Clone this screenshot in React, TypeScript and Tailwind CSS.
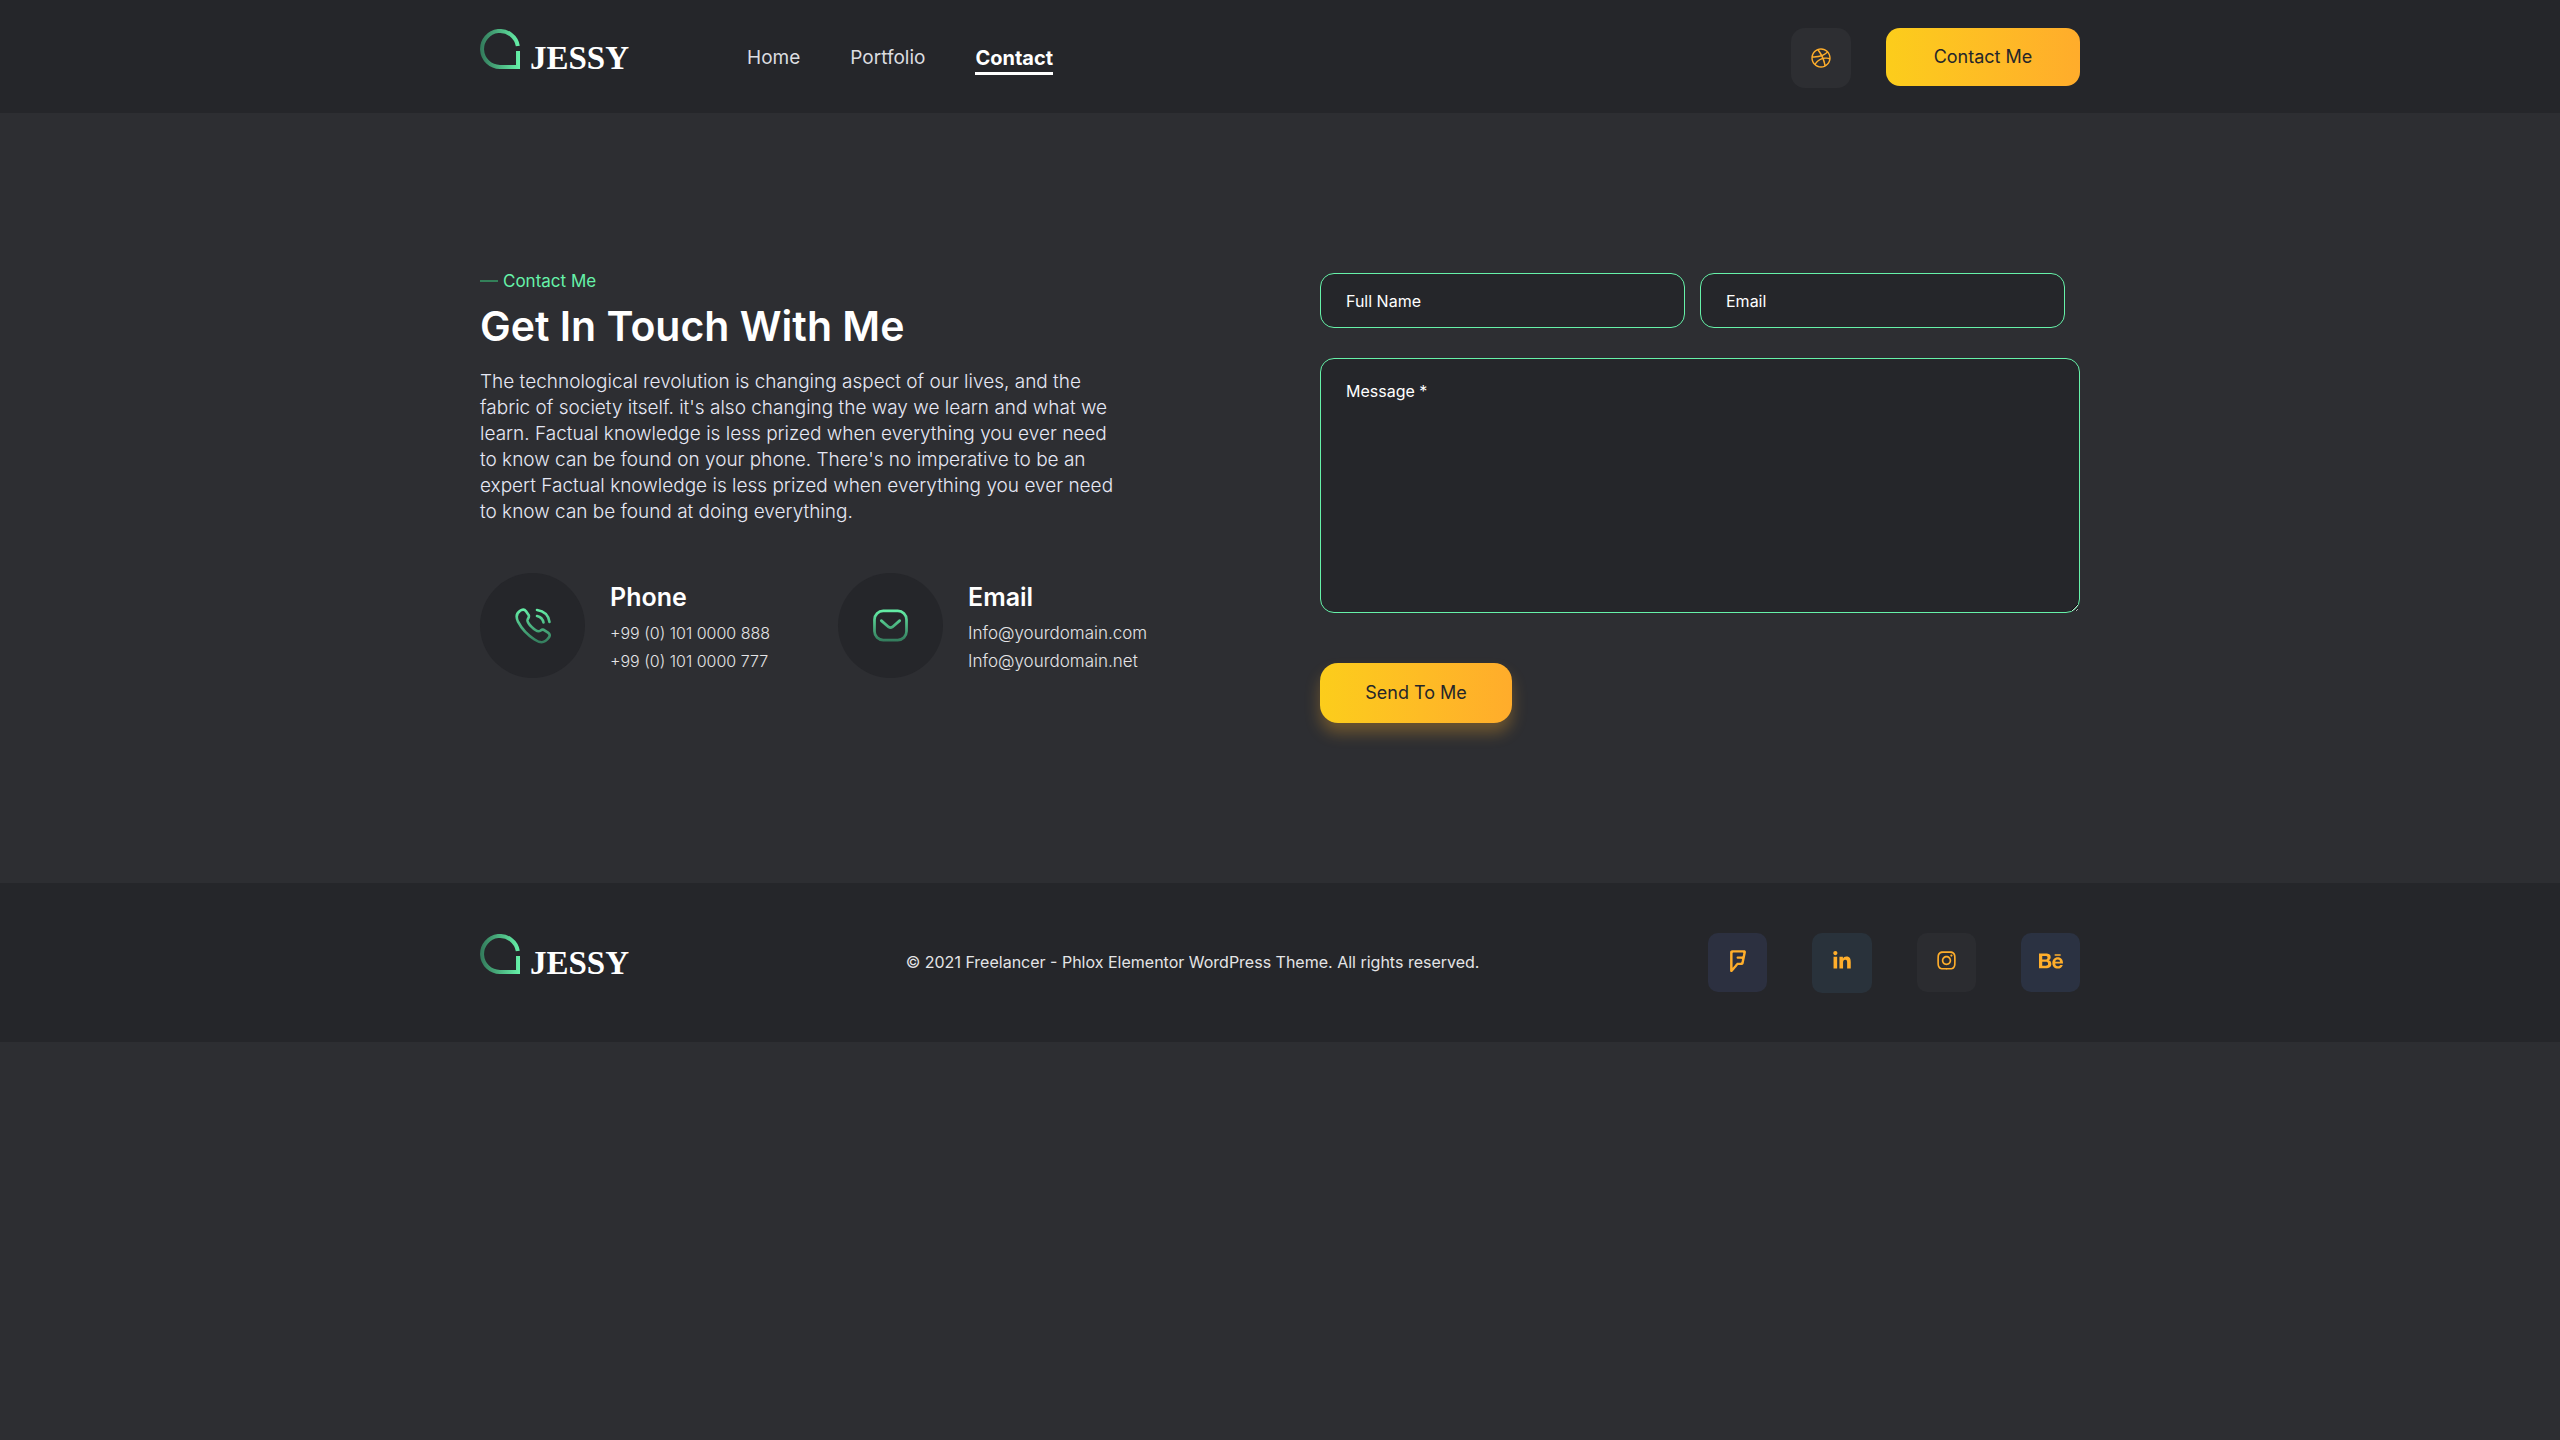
import { FaBehance, FaDribbble, FaFoursquare, FaInstagram, FaLinkedinIn } from "react-icons/fa";

type LogoProps = {
  id: string;
};

function Logo({ id }: LogoProps) {
  return (
    <a href="#" className="flex items-start gap-2.5">
      <svg width="40" height="40" viewBox="0 0 40 40" fill="none" className="mt-px block">
        <defs>
          <linearGradient id={id} x1="0" y1="20" x2="40" y2="20" gradientUnits="userSpaceOnUse">
            <stop stopColor="#32785a" />
            <stop offset="1" stopColor="#66f2a9" />
          </linearGradient>
        </defs>
        <path
          d="M37.8 17A18 18 0 1 0 20 38H38V22"
          stroke={`url(#${id})`}
          strokeWidth="4"
        />
      </svg>
      <span className="mt-3 font-['Liberation_Serif',serif] text-[33px] leading-9 font-bold text-white">
        JESSY
      </span>
    </a>
  );
}

function PhoneIcon() {
  return (
    <svg width="36" height="36" viewBox="0 0 36 36" fill="none" strokeLinecap="round" strokeLinejoin="round">
      <defs>
        <linearGradient id="phone" x1="0" y1="0" x2="0" y2="36" gradientUnits="userSpaceOnUse">
          <stop stopColor="#66f2a9" />
          <stop offset="1" stopColor="#32785a" />
        </linearGradient>
      </defs>
      <g stroke="url(#phone)" strokeWidth="2.6">
        <path d="M5 2.800C7.500 1 9.500 1.200 11 3.200L13.600 7C15 9.500 12.300 10.300 12.500 12.700C13 16 20 23 23.500 23.300C25.700 23.500 26 20.800 28.700 21.800L33 24.600C35 26 35.200 27.800 33.800 29.600C29.500 35.800 25 35.200 19.500 31.500C12.500 27 6.500 20.500 3 13.700C0.800 9 1 5.500 5 2.800Z" />
        <path d="M22 2C29 3 33.500 7.500 34.500 14" />
        <path d="M22 8C25.500 8.800 27.800 11 28.500 14.500" />
      </g>
    </svg>
  );
}

function MailIcon() {
  return (
    <svg width="35" height="33" viewBox="0 0 36 34" fill="none" strokeLinecap="round" strokeLinejoin="round">
      <defs>
        <linearGradient id="mail" x1="0" y1="0" x2="0" y2="34" gradientUnits="userSpaceOnUse">
          <stop stopColor="#66f2a9" />
          <stop offset="1" stopColor="#32785a" />
        </linearGradient>
      </defs>
      <g stroke="url(#mail)" strokeWidth="2.8">
        <rect x="1.500" y="2" width="33" height="30" rx="9" />
        <path d="M8.500 12L16 18.500Q18 20 20 18.500L27.500 12" />
      </g>
    </svg>
  );
}

export default function App() {
  return (
    <div className="min-h-screen bg-[#2d2e32] font-[Inter,sans-serif] text-white">
      <header className="bg-[#25262a]">
        <div className="mx-auto flex h-[113px] max-w-[1600px] items-start pt-7">
          <Logo id="logo-header" />
          <nav className="mt-4 ml-[118px] flex gap-[50px] text-[19px] leading-7 text-[#dcdde0]">
            <a href="#">Home</a>
            <a href="#">Portfolio</a>
            <a href="#" className="border-b-3 border-white text-xl leading-7 font-bold text-white">
              Contact
            </a>
          </nav>
          <div className="ml-auto flex items-start gap-[35px]">
            <a
              href="#"
              aria-label="Dribbble"
              className="flex size-[60px] items-center justify-center rounded-[14px] bg-[#2d2e32] text-[#ffae2b]"
            >
              <FaDribbble size={20} />
            </a>
            <button className="h-[58px] w-[194px] rounded-[14px] bg-linear-to-r from-[#fccd1b] to-[#ffac2b] text-lg text-[#25262a]">
              Contact Me
            </button>
          </div>
        </div>
      </header>

      <main className="mx-auto flex max-w-[1600px] justify-between pt-40 pb-40">
        <section className="w-[700px]">
          <p className="mt-[-4px] flex items-center gap-[5px] text-[17px] leading-6 text-[#66f2a9]">
            <span className="h-0.5 w-[18px] bg-[#338059]" />
            Contact Me
          </p>
          <h1 className="mt-2 text-[41px] leading-[50px] font-semibold">Get In Touch With Me</h1>
          <p className="mt-[18px] text-[19px] leading-[26px] font-light text-[#e6e8f5]">
            The technological revolution is changing aspect of our lives, and the
            <br />
            fabric of society itself. it's also changing the way we learn and what we
            <br />
            learn. Factual knowledge is less prized when everything you ever need
            <br />
            to know can be found on your phone. There's no imperative to be an
            <br />
            expert Factual knowledge is less prized when everything you ever need
            <br />
            to know can be found at doing everything.
          </p>
          <div className="mt-12 flex">
            <div className="flex w-[358px] gap-[25px]">
              <div className="flex size-[105px] items-center justify-center rounded-full bg-[#25262a]">
                <PhoneIcon />
              </div>
              <div className="pt-2">
                <h2 className="text-[25px] leading-8 font-semibold">Phone</h2>
                <p className="mt-1.5 text-base leading-7 font-light text-[#e4e4e6]">
                  +99 (0) 101 0000 888
                  <br />
                  +99 (0) 101 0000 777
                </p>
              </div>
            </div>
            <div className="flex gap-[25px]">
              <div className="flex size-[105px] items-center justify-center rounded-full bg-[#25262a]">
                <MailIcon />
              </div>
              <div className="pt-2">
                <h2 className="text-[25px] leading-8 font-semibold">Email</h2>
                <p className="mt-1.5 text-[17px] leading-7 font-light text-[#e4e4e6]">
                  Info@yourdomain.com
                  <br />
                  Info@yourdomain.net
                </p>
              </div>
            </div>
          </div>
        </section>

        <form className="w-[760px]">
          <div className="mr-[15px] flex gap-[15px]">
            <input
              type="text"
              aria-label="Full Name"
              placeholder="Full Name"
              className="h-[55px] min-w-0 flex-1 rounded-[14px] border border-[#66f2a9] bg-[#25262a] px-[25px] text-base placeholder:text-white"
            />
            <input
              type="email"
              aria-label="Email"
              placeholder="Email"
              className="h-[55px] min-w-0 flex-1 rounded-[14px] border border-[#66f2a9] bg-[#25262a] px-[25px] text-base placeholder:text-white"
            />
          </div>
          <textarea
            aria-label="Message"
            placeholder="Message *"
            className="mt-[30px] block h-[255px] w-full rounded-[14px] border border-[#66f2a9] bg-[#25262a] px-[25px] py-5 text-base placeholder:text-white"
          />
          <button
            type="button"
            className="mt-[50px] h-[60px] w-48 rounded-[18px] bg-linear-to-r from-[#fccd1b] to-[#ffac2b] text-lg text-[#25262a] shadow-[0_10px_15px_#ffae2b4d]"
          >
            Send To Me
          </button>
        </form>
      </main>

      <footer className="bg-[#25262a]">
        <div className="mx-auto flex h-[159px] max-w-[1600px] items-start pt-[50px]">
          <Logo id="logo-footer" />
          <p className="mt-[17px] flex-1 pl-12 text-center text-base leading-6 text-[#e4e4e6]">
            © 2021 Freelancer - Phlox Elementor WordPress Theme. All rights reserved.
          </p>
          <div className="flex gap-[45px] text-[#ffae2b]">
            <a
              href="#"
              aria-label="Foursquare"
              className="flex size-[59px] items-center justify-center rounded-[10px] bg-[#2c3040] pb-1"
            >
              <FaFoursquare size={22} />
            </a>
            <a
              href="#"
              aria-label="LinkedIn"
              className="flex size-[60px] items-center justify-center rounded-[10px] bg-[#29323b] pb-1"
            >
              <FaLinkedinIn size={20} />
            </a>
            <a
              href="#"
              aria-label="Instagram"
              className="flex size-[59px] items-center justify-center rounded-[10px] bg-[#2b2c30] pb-1"
            >
              <FaInstagram size={21} />
            </a>
            <a
              href="#"
              aria-label="Behance"
              className="flex size-[59px] items-center justify-center rounded-[10px] bg-[#2b3242] pb-1"
            >
              <FaBehance size={24} />
            </a>
          </div>
        </div>
      </footer>
    </div>
  );
}
